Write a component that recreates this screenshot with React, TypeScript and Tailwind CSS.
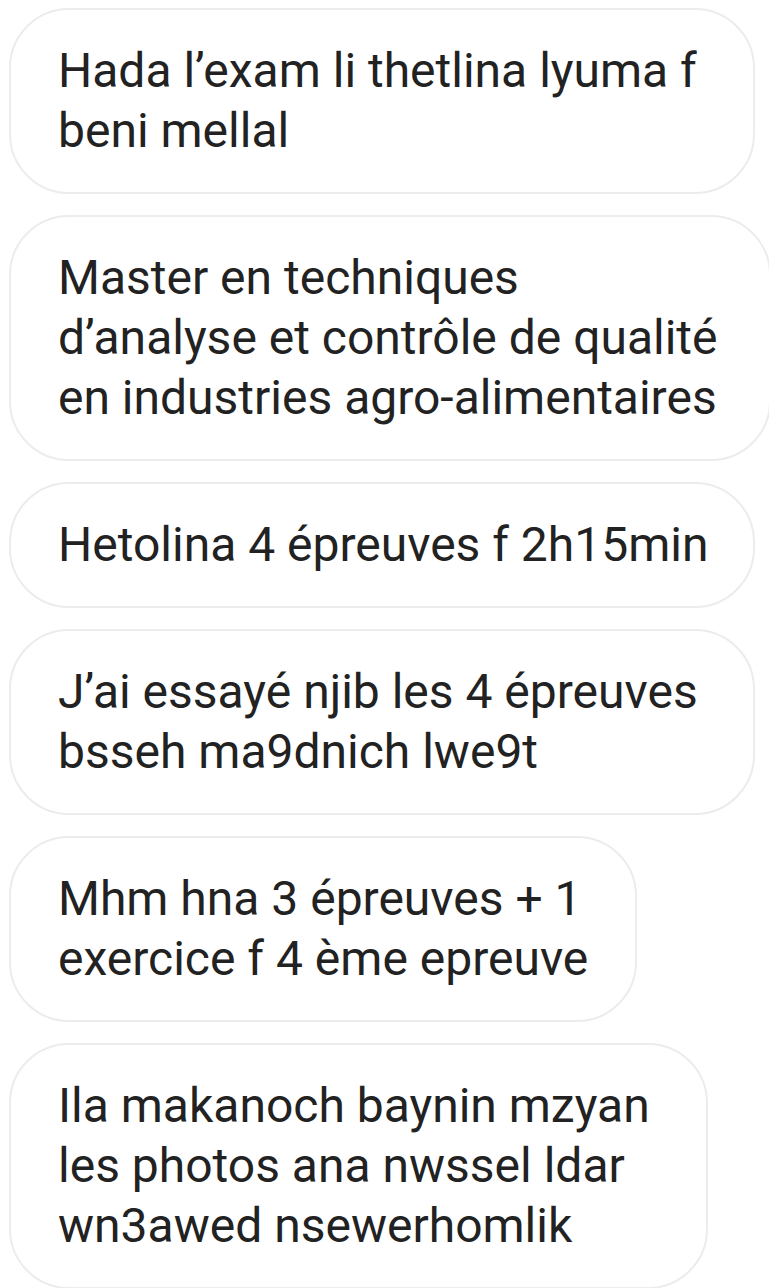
import React from "react";

type Message = {
  lines: string[];
  width: string;
};

const messages: Message[] = [
  { lines: ["Hada l’exam li thetlina lyuma f", "beni mellal"], width: "w-[746px]" },
  {
    lines: [
      "Master en techniques",
      "d’analyse et contrôle de qualité",
      "en industries agro-alimentaires",
    ],
    width: "w-[762px]",
  },
  { lines: ["Hetolina 4 épreuves f 2h15min"], width: "w-[746px]" },
  { lines: ["J’ai essayé njib les 4 épreuves", "bsseh ma9dnich lwe9t"], width: "w-[746px]" },
  { lines: ["Mhm hna 3 épreuves + 1", "exercice f 4 ème epreuve"], width: "w-[628px]" },
  {
    lines: ["Ila makanoch baynin mzyan", "les photos ana nwssel ldar", "wn3awed nsewerhomlik"],
    width: "w-[699px]",
  },
];

const Bubble = ({ lines, width }: Message) => (
  <div
    className={`${width} shrink-0 rounded-[60px] border-2 border-[#ececec] bg-white px-[47px] py-[31px] text-[48px] leading-[60px] text-[#222222]`}
  >
    {lines.map((line, i) => (
      <div key={i} className="whitespace-nowrap">
        {line}
      </div>
    ))}
  </div>
);

const App = () => {
  return (
    <div
      className="h-[1288px] w-[769px] overflow-hidden bg-white"
      style={{ fontFamily: "Roboto, 'Noto Sans', sans-serif" }}
    >
      <div className="flex flex-col items-start gap-[21px] pl-[9px] pt-[8px]">
        {messages.map((m, i) => (
          <Bubble key={i} {...m} />
        ))}
      </div>
    </div>
  );
};

export default App;
